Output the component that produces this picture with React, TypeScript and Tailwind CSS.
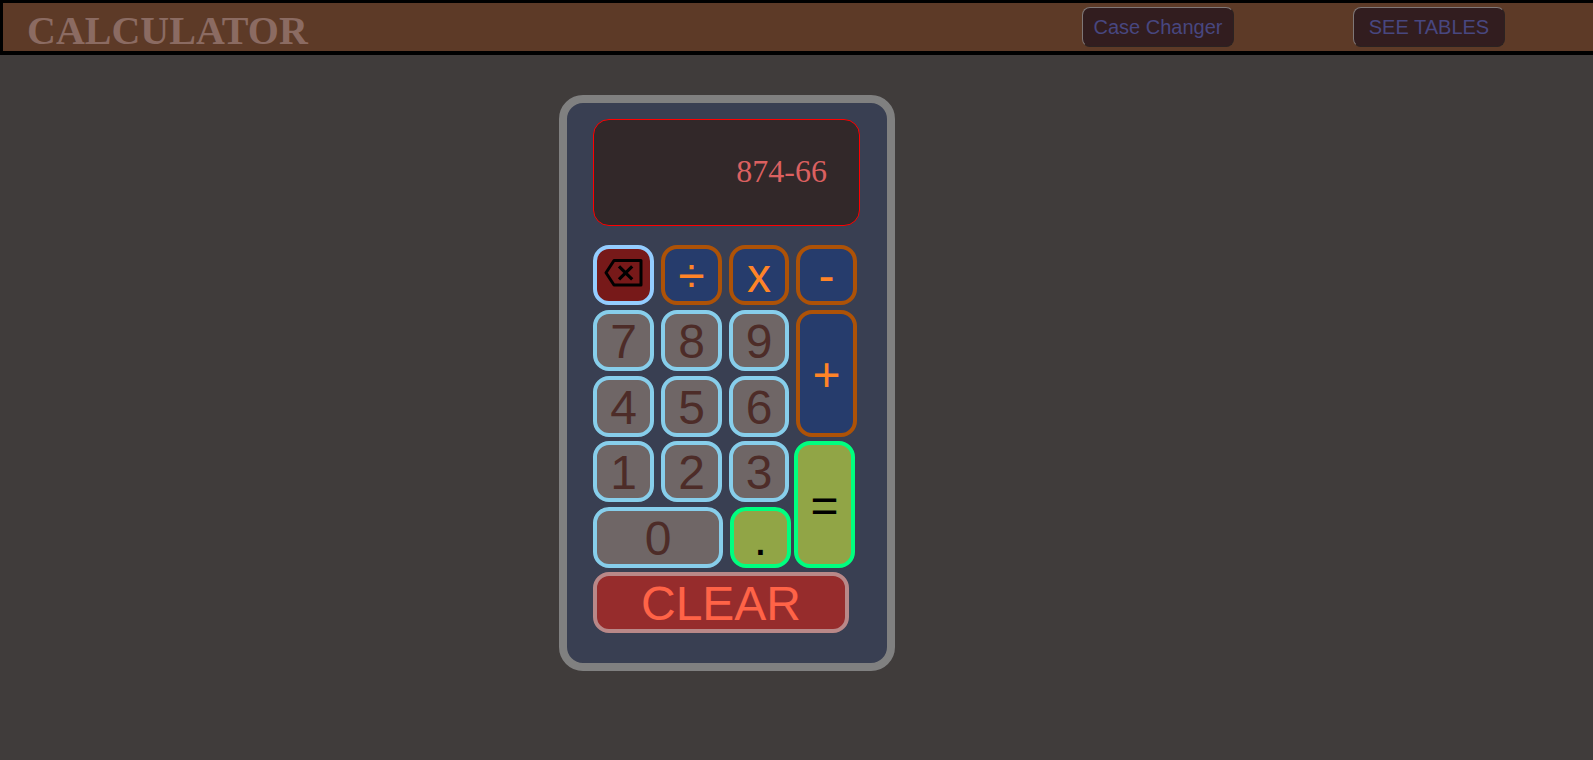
import { useState } from "react";

const KEY = "flex items-center justify-center rounded-2xl border-4 pt-0.5 text-5xl leading-none cursor-pointer";
const DIGIT = `${KEY} border-[#87ceeb] bg-[#6f6666] text-[#4d2c28]`;
const OPERATOR = `${KEY} border-[#ad5207] bg-[#263c6c] text-[#ff8427]`;
const GREEN = `${KEY} border-[#00ff7f] bg-[#91a546] text-black`;

const NAV_BUTTON =
  "flex h-10 w-[152px] items-center justify-center rounded-lg border border-t-[#7f7777] border-l-[#7f7777] border-r-[#2b2222] border-b-[#2b2222] bg-[#321d1f] text-xl text-[#484780] cursor-pointer";

export default function App() {
  const [value, setValue] = useState("874-66");

  function press(key: string) {
    setValue((current) => current + key);
  }

  function evaluate() {
    const match = value.match(/^(-?[\d.]+)([÷x+-])([\d.]+)$/);
    if (!match) return;
    const a = Number(match[1]);
    const b = Number(match[3]);
    const results: Record<string, number> = {
      "÷": a / b,
      x: a * b,
      "+": a + b,
      "-": a - b,
    };
    setValue(String(results[match[2]]));
  }

  return (
    <div className="min-h-screen bg-[#403c3b] font-['Liberation_Sans',Arial,sans-serif]">
      <header className="flex items-center justify-between border-t-[3px] border-b-4 border-l-[3px] border-black bg-[#5d3a27] pr-[88px] pl-6">
        <h1 className="pt-2 font-['Liberation_Serif',serif] text-[40px] leading-10 font-bold text-[#8b6b62]">
          CALCULATOR
        </h1>
        <nav className="flex gap-[119px]">
          <button className={NAV_BUTTON}>Case Changer</button>
          <button className={NAV_BUTTON}>SEE TABLES</button>
        </nav>
      </header>

      <main className="flex justify-center pt-10 pr-[139px]">
        <div className="w-[336px] rounded-3xl border-8 border-[#808080] bg-[#393f52] px-[26px] pt-4 pb-[30px]">
          <input
            aria-label="Result"
            readOnly
            value={value}
            className="block h-[107px] w-[267px] rounded-2xl border border-[#ff0000] bg-[#322829] px-8 pb-0.5 text-right font-['Liberation_Serif',serif] text-[32px] text-[#db6060] outline-none"
          />

          <div className="mt-[19px] grid grid-cols-[61px_61px_60px_61px] grid-rows-[60px_61px_61px] gap-x-[7px] gap-y-[5px]">
            <button
              aria-label="Backspace"
              onClick={() => setValue(value.slice(0, -1))}
              className={`${KEY} border-[#94cdff] bg-[#771919] text-black`}
            >
              <svg width="40" height="28" viewBox="0 0 40 28" fill="none" stroke="currentColor" strokeWidth="3" className="mr-0.5 mb-1.5">
                <path d="M11 1.5H38V26H11L3 13.8Z" strokeLinejoin="round" />
                <path d="M16 7.3L29.2 20.3M29.2 7.3L16 20.3" strokeWidth="3.2" />
              </svg>
            </button>
            <button className={OPERATOR} onClick={() => press("÷")}>÷</button>
            <button className={OPERATOR} onClick={() => press("x")}>x</button>
            <button className={OPERATOR} onClick={() => press("-")}>-</button>
            <button className={DIGIT} onClick={() => press("7")}>7</button>
            <button className={DIGIT} onClick={() => press("8")}>8</button>
            <button className={DIGIT} onClick={() => press("9")}>9</button>
            <button className={`${OPERATOR} row-span-2`} onClick={() => press("+")}>+</button>
            <button className={DIGIT} onClick={() => press("4")}>4</button>
            <button className={DIGIT} onClick={() => press("5")}>5</button>
            <button className={DIGIT} onClick={() => press("6")}>6</button>
          </div>

          <div className="mt-1 flex gap-[3px]">
            <div className="flex flex-col gap-[5px]">
              <div className="grid h-[61px] grid-cols-[61px_61px_60px] gap-[7px]">
                <button className={DIGIT} onClick={() => press("1")}>1</button>
                <button className={DIGIT} onClick={() => press("2")}>2</button>
                <button className={DIGIT} onClick={() => press("3")}>3</button>
              </div>
              <div className="grid h-[61px] grid-cols-[130px_61px] gap-[7px]">
                <button className={DIGIT} onClick={() => press("0")}>0</button>
                <button className={GREEN} onClick={() => press(".")}>.</button>
              </div>
            </div>
            <button className={`${GREEN} w-[61px]`} onClick={evaluate}>=</button>
          </div>

          <button
            onClick={() => setValue("")}
            className={`${KEY} mt-1 h-[61px] w-64 border-[#b98888] bg-[#962c2c] text-[#ff6347]`}
          >
            CLEAR
          </button>
        </div>
      </main>
    </div>
  );
}
